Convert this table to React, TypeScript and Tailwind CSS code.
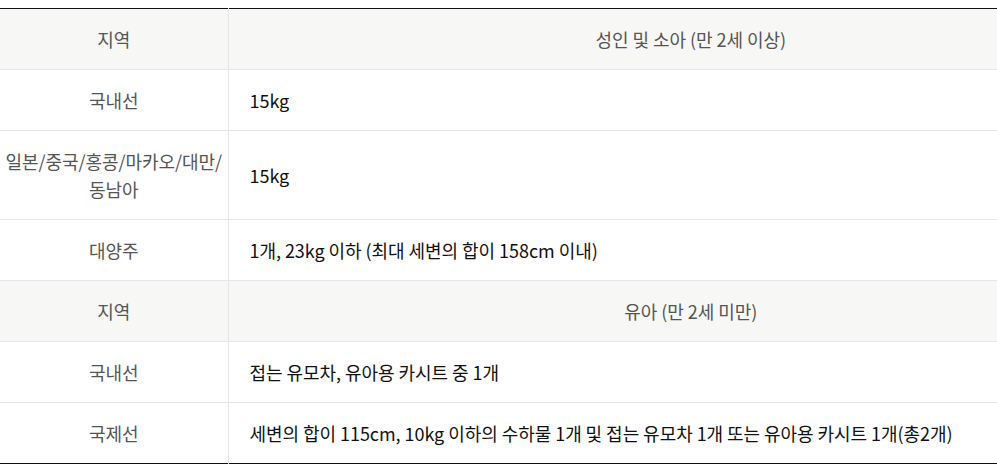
import React from 'react';

type Row = { region: React.ReactNode; value: string; head?: boolean };

const rows: Row[] = [
  { region: '지역', value: '성인 및 소아 (만 2세 이상)', head: true },
  { region: '국내선', value: '15kg' },
  {
    region: (
      <>
        일본/중국/홍콩/마카오/대만/
        <br />
        동남아
      </>
    ),
    value: '15kg',
  },
  { region: '대양주', value: '1개, 23kg 이하 (최대 세변의 합이 158cm 이내)' },
  { region: '지역', value: '유아 (만 2세 미만)', head: true },
  { region: '국내선', value: '접는 유모차, 유아용 카시트 중 1개' },
  { region: '국제선', value: '세변의 합이 115cm, 10kg 이하의 수하물 1개 및 접는 유모차 1개 또는 유아용 카시트 1개(총2개)' },
];

export default function App() {
  return (
    <div
      className="w-[997px] h-[472px] bg-white pt-[8px] overflow-hidden"
      style={{ fontFamily: '"Noto Sans CJK KR", "Noto Sans", sans-serif' }}
    >
      <table className="w-[1153px] border-collapse border-t border-b border-t-[#111] border-b-[#111] text-[18px] leading-[28px] tracking-[-0.05px]">
        <tbody>
          {rows.map((r, i) => (
            <tr
              key={i}
              className={`${i > 0 ? 'border-t border-t-[#e6e6e6]' : ''} ${r.head ? 'bg-[#f7f7f5]' : 'bg-white'}`}
            >
              <td className="w-[228px] border-r border-r-[#e6e6e6] text-center text-[#555] py-[16px] px-0 whitespace-nowrap">
                {r.region}
              </td>
              <td
                className={
                  r.head
                    ? 'text-center text-[#555] py-[16px] px-[21px]'
                    : 'text-left text-[#111] py-[16px] px-[21px]'
                }
              >
                {r.value}
              </td>
            </tr>
          ))}
        </tbody>
      </table>
    </div>
  );
}
